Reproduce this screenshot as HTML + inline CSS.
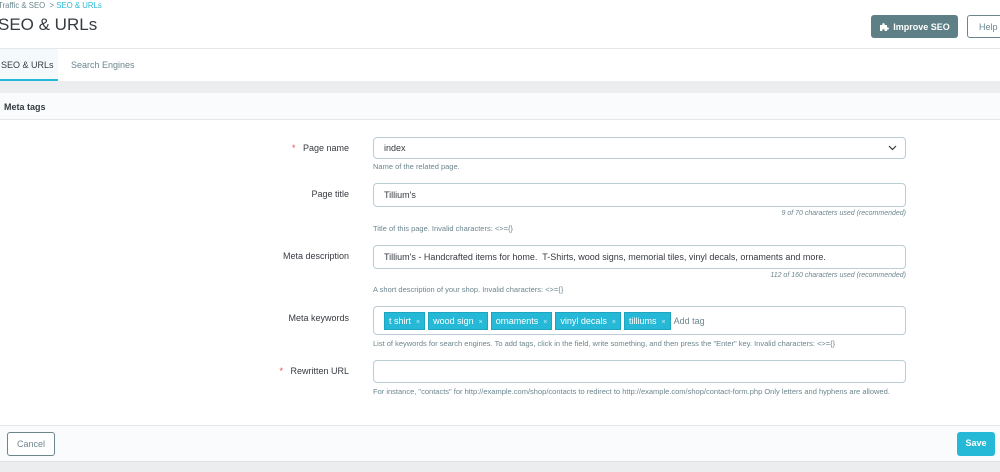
<!DOCTYPE html>
<html><head><meta charset="utf-8"><style>
*{box-sizing:border-box;margin:0;padding:0}
body{width:1000px;height:472px;overflow:hidden;background:#ebedef;font-family:"Liberation Sans",sans-serif;color:#363a41;position:relative}
.abs{position:absolute}
.hdr{left:0;top:0;width:1000px;height:49px;background:#fff;border-bottom:1px solid #e5e8eb}
.tabs{left:0;top:49px;width:1000px;height:32px;background:#fff}
.panel{left:0;top:93px;width:1000px;height:369px;background:#fff}
.lbl{font-size:9px;color:#363a41;text-align:right;width:349px;left:0}
.inp{left:373px;width:533px;border:1px solid #bbcdd2;border-radius:4px;background:#fff;font-size:9px;padding-left:10px;display:flex;align-items:center}
.help{left:373px;font-size:7.5px;color:#6c868e}
.cnt{right:94px;font-size:7px;color:#6c868e;font-style:italic}
.tag{display:inline-block;background:#25b9d7;color:#fff;font-size:9px;padding:3px 4px;margin-right:3px;border:1px solid #1ea5c0}
.tag i{font-style:normal;font-size:7px;color:#d0f0f7;margin-left:5px}
.req{color:#e84e4e}
</style></head><body>
<div class="abs hdr"></div>
<div class="abs" style="left:-2px;top:1px;font-size:7.8px;color:#6c868e">Traffic &amp; SEO &nbsp;&gt; <span style="color:#25b9d7">SEO &amp; URLs</span></div>
<div class="abs" style="left:-2px;top:15px;font-size:17px;color:#363a41">SEO &amp; URLs</div>
<div class="abs" style="left:871px;top:15px;width:87px;height:23px;background:#5f7f87;border-radius:3px;color:#fff;font-size:9px;font-weight:bold;display:flex;align-items:center;justify-content:center">
<svg width="10" height="10" viewBox="0 0 10 10" style="margin-right:4px"><path d="M1 3h2.5a1.2 1.2 0 1 1 2 0H8v2.5a1.2 1.2 0 1 1 0 2V9H5.5a1.2 1.2 0 1 0-2 0H1z" fill="#fff"/></svg>Improve SEO</div>
<div class="abs" style="left:967px;top:15px;width:40px;height:23px;border:1px solid #6c868e;border-radius:3px;background:#fff;font-size:9px;color:#6c868e;padding:6px 0 0 11px">Help</div>
<div class="abs tabs"></div>
<div class="abs" style="left:0;top:49px;width:58px;height:32px;background:#f4fafc;border-bottom:2px solid #25b9d7;font-size:9px;padding:11px 0 0 1px">SEO &amp; URLs</div>
<div class="abs" style="left:71px;top:60px;font-size:9px;color:#6c868e">Search Engines</div>
<div class="abs panel"></div>
<div class="abs" style="left:0;top:93px;width:1000px;height:27px;background:#fafbfc;border-bottom:1px solid #e5e8eb;font-size:9px;font-weight:bold;padding:9px 0 0 4px">Meta tags</div>

<div class="abs lbl" style="top:143px"><span class="req">*</span> &nbsp;&nbsp;Page name</div>
<div class="abs inp" style="top:137px;height:22px">index<svg class="abs" style="right:8px;top:7px" width="9" height="6" viewBox="0 0 9 6"><path d="M1 1l3.5 3.5L8 1" stroke="#363a41" fill="none" stroke-width="1.2"/></svg></div>
<div class="abs help" style="top:162px">Name of the related page.</div>

<div class="abs lbl" style="top:189px">Page title</div>
<div class="abs inp" style="top:183px;height:24px">Tillium's</div>
<div class="abs cnt" style="top:210px">9 of 70 characters used (recommended)</div>
<div class="abs help" style="top:224px">Title of this page. Invalid characters: &lt;&gt;={}</div>

<div class="abs lbl" style="top:251px">Meta description</div>
<div class="abs inp" style="top:245px;height:24px">Tillium's - Handcrafted items for home.&nbsp; T-Shirts, wood signs, memorial tiles, vinyl decals, ornaments and more.</div>
<div class="abs cnt" style="top:272px">112 of 160 characters used (recommended)</div>
<div class="abs help" style="top:285px">A short description of your shop. Invalid characters: &lt;&gt;={}</div>

<div class="abs lbl" style="top:313px">Meta keywords</div>
<div class="abs inp" style="top:306px;height:29px;padding-left:10px"><span class="tag">t shirt<i>×</i></span><span class="tag">wood sign<i>×</i></span><span class="tag">ornaments<i>×</i></span><span class="tag">vinyl decals<i>×</i></span><span class="tag">tilliums<i>×</i></span><span style="color:#6c868e">Add tag</span></div>
<div class="abs help" style="top:339px">List of keywords for search engines. To add tags, click in the field, write something, and then press the "Enter" key. Invalid characters: &lt;&gt;={}</div>

<div class="abs lbl" style="top:366px"><span class="req">*</span> &nbsp;&nbsp;Rewritten URL</div>
<div class="abs inp" style="top:360px;height:23px"></div>
<div class="abs help" style="top:387px">For instance, "contacts" for http://example.com/shop/contacts to redirect to http://example.com/shop/contact-form.php Only letters and hyphens are allowed.</div>

<div class="abs" style="left:0;top:425px;width:1000px;height:37px;background:#fafbfc;border-top:1px solid #e5e8eb;border-bottom:1px solid #e0e3e6"></div>
<div class="abs" style="left:7px;top:432px;width:48px;height:24px;border:1px solid #6c868e;border-radius:3px;background:#fff;font-size:9px;color:#6c868e;text-align:center;padding-top:6px">Cancel</div>
<div class="abs" style="left:957px;top:432px;width:38px;height:24px;border-radius:3px;background:#25b9d7;font-size:9px;color:#fff;font-weight:bold;text-align:center;padding-top:6px">Save</div>
</body></html>
